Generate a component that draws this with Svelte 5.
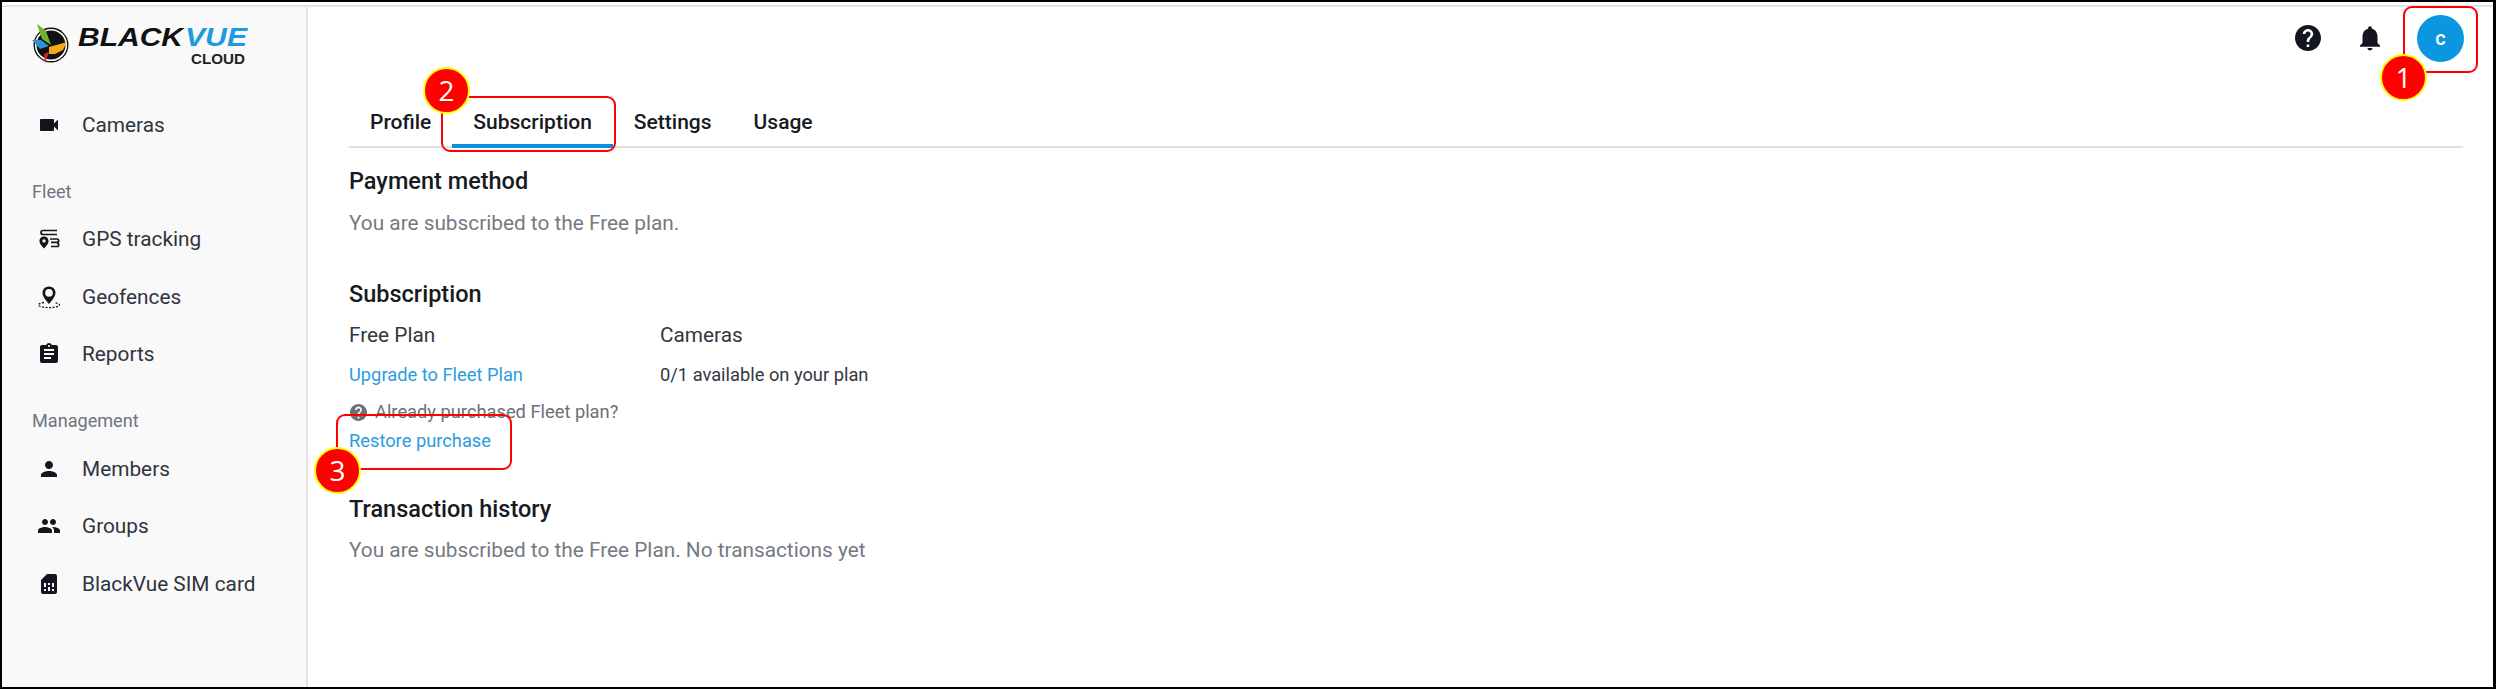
<script>
  const icons = {
    camera: 'M17 10.5V7c0-.55-.45-1-1-1H4c-.55 0-1 .45-1 1v10c0 .55.45 1 1 1h12c.55 0 1-.45 1-1v-3.5l4 4v-11l-4 4z',
    reports: 'M19 3h-4.18C14.4 1.84 13.3 1 12 1c-1.3 0-2.4.84-2.82 2H5c-1.1 0-2 .9-2 2v14c0 1.1.9 2 2 2h14c1.1 0 2-.9 2-2V5c0-1.1-.9-2-2-2zm-7 0c.55 0 1 .45 1 1s-.45 1-1 1-1-.45-1-1 .45-1 1-1zm2 14H7v-2h7v2zm3-4H7v-2h10v2zm0-4H7V7h10v2z',
    members: 'M12 12c2.21 0 4-1.79 4-4s-1.79-4-4-4-4 1.79-4 4 1.79 4 4 4zm0 2c-2.67 0-8 1.34-8 4v2h16v-2c0-2.66-5.33-4-8-4z',
    groups: 'M16 11c1.66 0 2.99-1.34 2.99-3S17.66 5 16 5c-1.66 0-3 1.34-3 3s1.34 3 3 3zm-8 0c1.66 0 2.99-1.34 2.99-3S9.66 5 8 5C6.34 5 5 6.34 5 8s1.34 3 3 3zm0 2c-2.33 0-7 1.17-7 3.5V19h14v-2.5c0-2.33-4.67-3.5-7-3.5zm8 0c-.29 0-.62.02-.97.05 1.16.84 1.97 1.97 1.97 3.45V19h6v-2.5c0-2.33-4.67-3.5-7-3.5z',
    sim: 'M19.99 4c0-1.1-.89-2-1.99-2h-8L4 8v12c0 1.1.9 2 2 2h12c1.1 0 2-.9 2-2l-.01-16zM9 19H7v-2h2v2zm8 0h-2v-2h2v2zm-8-4H7v-4h2v4zm4 4h-2v-4h2v4zm0-6h-2v-2h2v2zm4 2h-2v-4h2v4z'
  };
  const help = 'M12 2C6.48 2 2 6.48 2 12s4.48 10 10 10 10-4.48 10-10S17.52 2 12 2zm1 17h-2v-2h2v2zm2.07-7.75l-.9.92C13.45 12.9 13 13.5 13 15h-2v-.5c0-1.1.45-2.1 1.17-2.83l1.24-1.26c.37-.36.59-.86.59-1.41 0-1.1-.9-2-2-2s-2 .9-2 2H8c0-2.21 1.79-4 4-4s4 1.79 4 4c0 .88-.36 1.68-.93 2.25z';
  const bell = 'M12 22c1.1 0 2-.9 2-2h-4c0 1.1.89 2 2 2zm6-6v-5c0-3.07-1.64-5.64-4.5-6.32V4c0-.83-.67-1.5-1.5-1.5s-1.5.67-1.5 1.5v.68C7.63 5.36 6 7.92 6 11v5l-2 2v1h16v-1l-2-2z';
  const tabs = ['Profile', 'Subscription', 'Settings', 'Usage'];
</script>

{#snippet navItem(label, name)}
  <div class="nav-item">
    <svg class="nav-icon" viewBox="0 0 24 24"><path d={icons[name]} /></svg>
    <span>{label}</span>
  </div>
{/snippet}

<div class="shot">
  <div class="frame">
    <div class="app">
      <aside class="sidebar">
        <div class="logo">
          <svg viewBox="0 0 230 50" width="230" height="50">
            <circle cx="21" cy="24" r="17.500" fill="#111" />
            <circle cx="21" cy="24" r="15.300" fill="none" stroke="#fff" stroke-width="1.600" />
            <path d="M7 3 L16 10 L21 24 L12 18 Z" fill="#6fb52c" />
            <path d="M2 19 L11 19 L19 25 L10 28 Z" fill="#2f8fd8" />
            <path d="M19 26 L30 23 L37 21 L33 29 L25 33 L19 33 Z" fill="#f5a81c" />
            <path d="M14 33 L19 31 L15 42 Z" fill="#d9261c" />
            <text class="logo-word" x="48" y="25" textLength="105" lengthAdjust="spacingAndGlyphs">BLACK</text>
            <text class="logo-word vue" x="155" y="25" textLength="62" lengthAdjust="spacingAndGlyphs">VUE</text>
            <text class="logo-sub" x="161" y="43" textLength="54" lengthAdjust="spacingAndGlyphs">CLOUD</text>
          </svg>
        </div>
        {@render navItem('Cameras', 'camera')}
        <div class="nav-label first">Fleet</div>
        <div class="nav-item">
          <svg class="nav-icon" viewBox="0 0 24 24">
            <path d="M6 3.500h14M6 3.500a2 2 0 0 0 0 4h14" fill="none" stroke="#14161f" stroke-width="1.700" />
            <path d="M13 12h7a1.600 1.600 0 0 1 0 3.400h-6M14 19.500h6a1.600 1.600 0 0 0 0-3.400" fill="none" stroke="#14161f" stroke-width="1.700" />
            <path fill-rule="evenodd" d="M7 9.500c2.700 0 4.600 2 4.600 4.400 0 2.700-2.600 5.400-4.600 7.600-2-2.200-4.600-4.900-4.600-7.600C2.400 11.500 4.300 9.500 7 9.500zm0 2.700a1.700 1.700 0 1 0 0 3.400 1.700 1.700 0 0 0 0-3.400z" />
          </svg>
          <span>GPS tracking</span>
        </div>
        <div class="nav-item">
          <svg class="nav-icon" viewBox="0 0 24 24">
            <path fill-rule="evenodd" d="M12 1.500c3.700 0 6.500 2.800 6.500 6.300 0 3.800-3.600 7.900-6.500 11.200-2.900-3.300-6.500-7.400-6.500-11.200C5.500 4.300 8.300 1.500 12 1.500zm0 2.600a3.800 3.800 0 1 0 0 7.600 3.800 3.800 0 0 0 0-7.600z" />
            <path d="M7 17.500C3.500 18 1.500 19 1.500 20c0 1.500 4.700 2.600 10.500 2.600s10.500-1.100 10.500-2.600c0-1-2-2-5.500-2.500" fill="none" stroke="#14161f" stroke-width="1.300" stroke-dasharray="2 1.500" />
          </svg>
          <span>Geofences</span>
        </div>
        {@render navItem('Reports', 'reports')}
        <div class="nav-label">Management</div>
        {@render navItem('Members', 'members')}
        {@render navItem('Groups', 'groups')}
        {@render navItem('BlackVue SIM card', 'sim')}
      </aside>

      <main class="main">
        <header class="topbar">
          <svg class="help" viewBox="2 2 20 20"><path d={help} /></svg>
          <svg class="bell" viewBox="0 0 24 24"><path d={bell} /></svg>
          <div class="avatar">c</div>
        </header>

        <nav class="tabs">
          {#each tabs as tab}
            <div class="tab" class:active={tab === 'Subscription'}>{tab}</div>
          {/each}
        </nav>

        <section class="payment">
          <h2>Payment method</h2>
          <p class="muted">You are subscribed to the Free plan.</p>
        </section>

        <section class="subscription">
          <h2>Subscription</h2>
          <div class="plan-grid">
            <div class="plan-col">
              <div class="plan-title">Free Plan</div>
              <a class="link" href="#upgrade">Upgrade to Fleet Plan</a>
              <div class="already">
                <svg class="small-help" viewBox="2 2 20 20"><path d={help} /></svg>
                Already purchased Fleet plan?
              </div>
              <a class="link restore" href="#restore">Restore purchase</a>
            </div>
            <div class="plan-col">
              <div class="plan-title">Cameras</div>
              <div class="available">0/1 available on your plan</div>
            </div>
          </div>
        </section>

        <section class="history">
          <h2>Transaction history</h2>
          <p class="muted">You are subscribed to the Free Plan. No transactions yet</p>
        </section>
      </main>
    </div>
  </div>

  <div class="mark-box box-one"></div>
  <div class="mark-box box-two"></div>
  <div class="mark-box box-three"></div>
  <div class="badge badge-one">1</div>
  <div class="badge badge-two">2</div>
  <div class="badge badge-three">3</div>
</div>

<style>
  :global(body) {
    margin: 0;
    background: #fff;
  }

  .shot {
    position: relative;
    width: 2496px;
    height: 689px;
    overflow: hidden;
    font-family: Roboto, "Liberation Sans", sans-serif;
  }

  .frame {
    box-sizing: border-box;
    height: 689px;
    border: solid #000;
    border-width: 2px 3px 2px 2px;
    padding-top: 3px;
    background: #fff;
  }

  .app {
    display: flex;
    height: 100%;
    border-top: 2px solid #e4e4e4;
    box-sizing: border-box;
  }

  .sidebar {
    box-sizing: border-box;
    flex: 0 0 306px;
    background: #f9f9f9;
    border-right: 2px solid #e3e3e3;
    padding-left: 30px;
    color: #2f3440;
  }

  .logo {
    height: 89px;
    padding-top: 14px;
    box-sizing: border-box;
  }

  .logo svg {
    display: block;
    margin-left: -2px;
  }

  .logo-word {
    font-family: "Liberation Sans", sans-serif;
    font-weight: 700;
    font-style: italic;
    font-size: 25px;
    fill: #111;
  }

  .logo-word.vue {
    fill: #1e9be0;
  }

  .logo-sub {
    font-family: "Liberation Sans", sans-serif;
    font-weight: 700;
    font-size: 15px;
    fill: #222;
  }

  .nav-item {
    display: flex;
    align-items: center;
    height: 57.500px;
    font-size: 20.800px;
    margin-left: 5px;
  }

  .nav-icon {
    width: 24px;
    height: 24px;
    fill: #14161f;
    margin-right: 21px;
    flex: none;
  }

  .nav-label {
    font-size: 18.100px;
    color: #6e7480;
    height: 22px;
    line-height: 22px;
    margin-top: 27px;
    margin-bottom: 8px;
  }

  .nav-label.first {
    margin-top: 27px;
  }

  .main {
    flex: 1;
    min-width: 0;
    padding: 0 30px 0 41px;
    color: #1c1f26;
  }

  .topbar {
    display: flex;
    justify-content: flex-end;
    align-items: center;
    height: 62px;
    margin-right: -1px;
  }

  .help {
    width: 26px;
    height: 26px;
    fill: #14161f;
  }

  .bell {
    width: 30px;
    height: 30px;
    fill: #14161f;
    margin-left: 34px;
  }

  .avatar {
    width: 47px;
    height: 47px;
    border-radius: 50%;
    background: #0b97e0;
    color: #fff;
    font-size: 20px;
    font-weight: 500;
    display: flex;
    align-items: center;
    justify-content: center;
    margin-left: 32px;
  }

  .tabs {
    display: flex;
    height: 79px;
    border-bottom: 2px solid #e0e0e0;
    box-sizing: border-box;
    align-items: stretch;
  }

  .tab {
    padding: 40px 21px 0;
    font-size: 21px;
    font-weight: 500;
    line-height: 26px;
    color: #171a21;
    box-sizing: border-box;
  }

  .tab.active {
    border-bottom: 4px solid #0b8fd8;
    margin-bottom: -2px;
  }

  h2 {
    margin: 0;
    font-size: 23.500px;
    font-weight: 500;
    line-height: 30px;
    color: #171a21;
  }

  .payment {
    padding-top: 18px;
  }

  .muted {
    margin: 14px 0 0;
    font-size: 20.800px;
    line-height: 26px;
    color: #757a82;
  }

  .history .muted {
    margin-top: 13px;
  }

  .subscription {
    margin-top: 43px;
  }

  .plan-grid {
    display: flex;
    margin-top: 13px;
  }

  .plan-col {
    width: 311px;
    display: flex;
    flex-direction: column;
    align-items: flex-start;
  }

  .plan-title {
    font-size: 20.800px;
    line-height: 26px;
    color: #33373f;
  }

  .link {
    font-size: 18.300px;
    line-height: 24px;
    color: #2c9be0;
    text-decoration: none;
    margin-top: 15px;
  }

  .already {
    display: flex;
    align-items: center;
    font-size: 18.300px;
    line-height: 24px;
    color: #6c7078;
    margin-top: 13px;
  }

  .small-help {
    width: 17px;
    height: 17px;
    fill: #6c7078;
    margin: 0 8px 0 1px;
  }

  .link.restore {
    margin-top: 5px;
  }

  .available {
    font-size: 18.300px;
    line-height: 24px;
    color: #33373f;
    margin-top: 15px;
  }

  .history {
    margin-top: 41px;
  }

  .mark-box {
    position: absolute;
    box-sizing: border-box;
    border: 2px solid #f00;
    border-radius: 9px;
  }

  .box-one {
    left: 2403px;
    top: 6px;
    width: 75px;
    height: 67px;
  }

  .box-two {
    left: 441px;
    top: 96px;
    width: 175px;
    height: 56px;
  }

  .box-three {
    left: 336px;
    top: 414px;
    width: 176px;
    height: 56px;
  }

  .badge {
    position: absolute;
    box-sizing: border-box;
    width: 47px;
    height: 47px;
    border-radius: 50%;
    background: #f00;
    border: 2px solid #ff0;
    color: #fff;
    font-family: "Open Sans", sans-serif;
    font-size: 28px;
    line-height: 42px;
    text-align: center;
  }

  .badge-one {
    left: 2380px;
    top: 54px;
  }

  .badge-two {
    left: 423px;
    top: 67px;
  }

  .badge-three {
    left: 314px;
    top: 447px;
  }
</style>
